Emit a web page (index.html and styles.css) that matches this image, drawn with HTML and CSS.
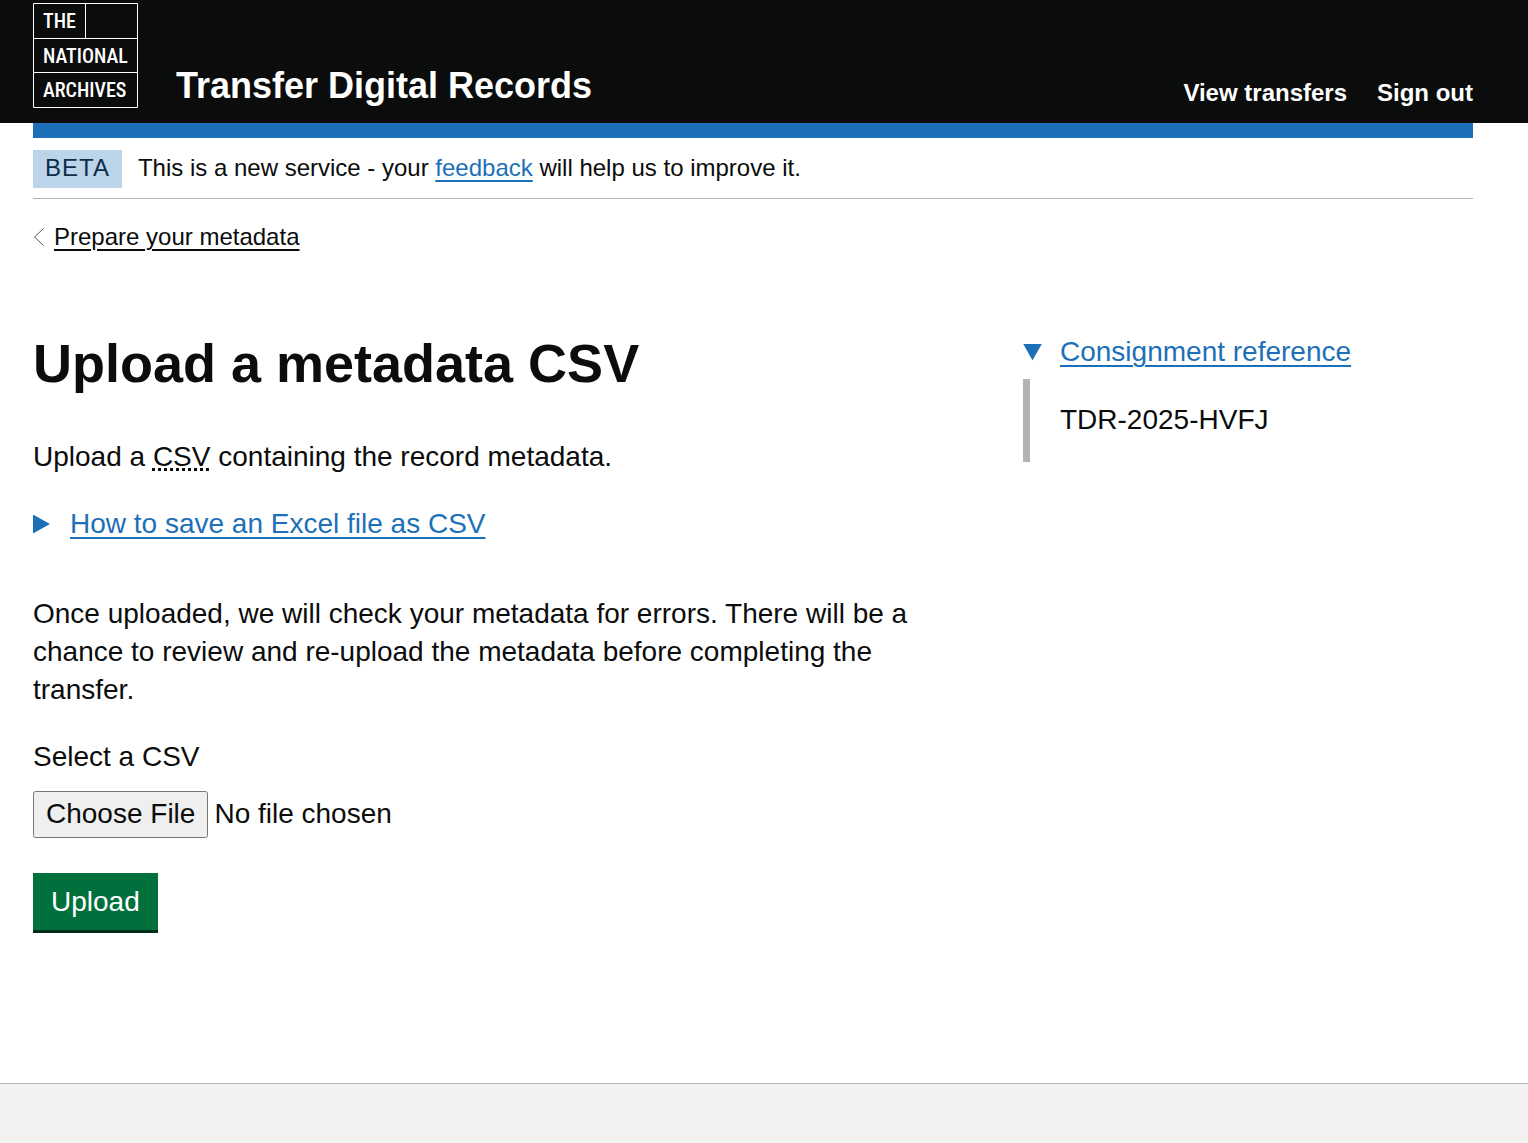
FILE: index.html
```html
<!DOCTYPE html>
<html lang="en">
<head>
<meta charset="utf-8">
<meta name="viewport" content="width=device-width, initial-scale=1">
<title>Upload a metadata CSV</title>
<link rel="stylesheet" href="styles.css">
</head>
<body>
<header class="header">
  <div class="container header-row">
    <a class="logo" href="#" aria-label="The National Archives">
      <svg width="105" height="105" viewBox="0 0 105 105" aria-hidden="true">
        <path class="logo-lines" d="M.5.5h104v104H.5zM.5 35.5h104M.5 69.5h104M52.5.5v35"/>
        <g class="logo-text">
          <text x="10" y="25">THE</text>
          <text x="10" y="60">NATIONAL</text>
          <text x="10" y="94">ARCHIVES</text>
        </g>
      </svg>
    </a>
    <a class="service" href="#">Transfer Digital Records</a>
    <nav class="nav">
      <a href="#">View transfers</a>
      <a href="#">Sign out</a>
    </nav>
  </div>
</header>
<div class="container">
  <div class="bar"></div>
  <div class="phase">
    <strong class="tag">BETA</strong>
    <span>This is a new service - your <a class="link" href="#">feedback</a> will help us to improve it.</span>
  </div>
  <a class="back" href="#">
    <svg width="12" height="18" viewBox="0 0 12 18" aria-hidden="true"><path d="M10.5.5 1.5 9l9 8.500"/></svg>
    <span>Prepare your metadata</span>
  </a>
  <div class="columns">
    <main>
      <h1>Upload a metadata CSV</h1>
      <p>Upload a <abbr title="Comma Separated Values">CSV</abbr> containing the record metadata.</p>
      <details class="help">
        <summary><span>How to save an Excel file as CSV</span></summary>
      </details>
      <p>Once uploaded, we will check your metadata for errors. There will be a chance to review and re-upload the metadata before completing the transfer.</p>
      <form>
        <label for="csv">Select a CSV</label>
        <input class="file" id="csv" type="file" accept=".csv">
        <button class="upload" type="button">Upload</button>
      </form>
    </main>
    <aside>
      <details open>
        <summary><span>Consignment reference</span></summary>
        <div class="details-text">TDR-2025-HVFJ</div>
      </details>
    </aside>
  </div>
</div>
<footer class="footer"></footer>
</body>
</html>
```
FILE: styles.css
```css
* { box-sizing: border-box; }

body {
  margin: 0;
  min-height: 100vh;
  display: flex;
  flex-direction: column;
  font: 28px/38px Arial, "Liberation Sans", sans-serif;
  color: #0b0c0c;
  background: #fff;
}

.container { width: 100%; padding: 0 55px 0 33px; }

.header { background: #0b0c0c; }
.header-row { display: flex; align-items: flex-end; padding-top: 3px; padding-bottom: 15px; }
.header a { color: #fff; text-decoration: none; font-weight: 700; }

.logo { display: block; height: 105px; margin-right: 38px; }
.logo svg { display: block; }
.logo-lines { fill: none; stroke: #fff; }
.logo-text {
  fill: #fff;
  font: 500 20px "Roboto Condensed", "Liberation Sans Narrow", "Arial Narrow", sans-serif;
}
.service { font-size: 36px; line-height: 45px; }
.nav { display: flex; gap: 30px; margin-left: auto; font-size: 24px; line-height: 30px; }
.bar { height: 15px; background: #1d70b8; }

.phase {
  display: flex;
  align-items: baseline;
  gap: 16px;
  padding: 12px 0 10px;
  border-bottom: 1px solid #b1b4b6;
  font-size: 24px;
  line-height: 30px;
}
.tag {
  padding: 3px 12px 5px;
  background: #bbd4ea;
  color: #0c2d4a;
  font-weight: 400;
  letter-spacing: 1px;
}

.link, summary { color: #1d70b8; }
.link, .back span, summary span {
  text-decoration: underline;
  text-decoration-thickness: 2px;
  text-underline-offset: 4px;
}

.back {
  display: inline-flex;
  align-items: center;
  gap: 9px;
  margin-top: 23px;
  color: #0b0c0c;
  font-size: 24px;
  line-height: 30px;
  text-decoration: none;
}
.back path { fill: none; stroke: #505a5f; }

.columns {
  display: grid;
  grid-template-columns: minmax(0, 21fr) minmax(0, 10fr);
  gap: 45px;
  padding-top: 77px;
}

h1 { margin: 0 0 45px; font-size: 54px; line-height: 60px; }
p { margin: 0 0 29px; }
abbr { text-decoration: underline dotted 3px; text-underline-offset: 2px; text-decoration-skip-ink: none; }

summary { display: flex; align-items: center; gap: 20px; list-style: none; cursor: pointer; }
summary::before {
  content: "";
  width: 17px;
  height: 19px;
  background: #1d70b8;
  clip-path: polygon(0 0, 100% 50%, 0 100%);
}
[open] summary { gap: 18px; }
[open] summary::before {
  width: 19px;
  height: 17px;
  clip-path: polygon(0 0, 100% 0, 50% 100%);
}
.help { margin-bottom: 52px; }
.details-text {
  margin-top: 8px;
  padding: 22px 30px 23px;
  border-left: 7px solid #b1b4b6;
}

label { display: block; margin-bottom: 15px; }
.file { display: block; max-width: 100%; font: inherit; color: inherit; }
.file::file-selector-button { margin-right: 6px; padding: 5px 11px 6px; color: inherit; }
.upload {
  display: block;
  margin-top: 35px;
  padding: 10px 18px 9px;
  border: 0;
  border-bottom: 3px solid #002d18;
  background: #00703c;
  color: #fff;
  font: inherit;
}

.footer { margin-top: auto; height: 60px; border-top: 1px solid #b1b4b6; background: #f3f2f1; }
```
